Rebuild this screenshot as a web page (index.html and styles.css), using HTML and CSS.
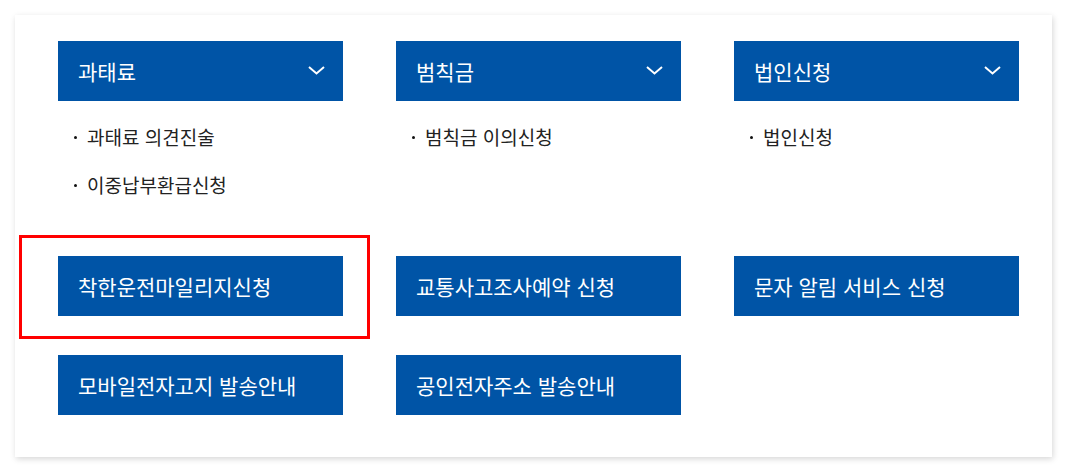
FILE: index.html
```html
<!DOCTYPE html>
<html lang="ko">
  <head>
    <meta charset="UTF-8" />
    <meta name="viewport" content="width=device-width, initial-scale=1.0" />
    <title>민원신청 메뉴</title>
    <link rel="stylesheet" href="styles.css">
  </head>
  <body>
    <div class="card">
      <div class="menu-grid">
        <div class="menu-group">
          <div class="menu-head">
            <span>과태료</span>
            <svg class="chevron" width="17" height="9" viewBox="0 0 17 9"><polyline points="1,1 8.5,7.5 16,1" /></svg>
          </div>
          <ul class="sub-list">
            <li>과태료 의견진술</li>
            <li>이중납부환급신청</li>
          </ul>
        </div>
        <div class="menu-group">
          <div class="menu-head">
            <span>범칙금</span>
            <svg class="chevron" width="17" height="9" viewBox="0 0 17 9"><polyline points="1,1 8.5,7.5 16,1" /></svg>
          </div>
          <ul class="sub-list">
            <li>범칙금 이의신청</li>
          </ul>
        </div>
        <div class="menu-group">
          <div class="menu-head">
            <span>법인신청</span>
            <svg class="chevron" width="17" height="9" viewBox="0 0 17 9"><polyline points="1,1 8.5,7.5 16,1" /></svg>
          </div>
          <ul class="sub-list">
            <li>법인신청</li>
          </ul>
        </div>

        <div class="menu-link highlighted">착한운전마일리지신청</div>
        <div class="menu-link">교통사고조사예약 신청</div>
        <div class="menu-link">문자 알림 서비스 신청</div>

        <div class="menu-link">모바일전자고지 발송안내</div>
        <div class="menu-link">공인전자주소 발송안내</div>
      </div>
    </div>
  </body>
</html>
```

FILE: styles.css
```css
html {
  font-family: "Noto Sans CJK KR", "Noto Sans", sans-serif;
}
body {
  margin: 0;
  padding: 15px;
  background-color: white;
}

.card {
  width: 1037px;
  height: 442px;
  box-sizing: border-box;
  padding: 26px 33px 0 43px;
  background-color: white;
  box-shadow: 1px 2px 6px rgba(0, 0, 0, 0.16);
}
.menu-grid {
  display: grid;
  grid-template-columns: repeat(3, 285px);
  column-gap: 53px;
  row-gap: 39px;
}

.menu-head,
.menu-link {
  height: 60px;
  box-sizing: border-box;
  display: flex;
  align-items: center;
  padding: 0 18px 1px 20px;
  background-color: #0054a6;
  color: white;
  font-size: 21px;
  font-weight: 400;
}
.menu-head {
  justify-content: space-between;
}
.chevron polyline {
  fill: none;
  stroke: white;
  stroke-width: 2;
}

.sub-list {
  list-style: none;
  margin: 0;
  padding: 12px 0 8px 0;
}
.sub-list li {
  position: relative;
  height: 48px;
  line-height: 48px;
  padding-left: 29px;
  font-size: 19px;
  color: #222;
}
.sub-list li::before {
  content: "";
  position: absolute;
  left: 16px;
  top: 23px;
  width: 3px;
  height: 3px;
  border-radius: 50%;
  background-color: #111;
}

/* red annotation frame */
.highlighted {
  position: relative;
}
.highlighted::after {
  content: "";
  position: absolute;
  left: -39px;
  top: -21px;
  width: 351px;
  height: 104px;
  box-sizing: border-box;
  border: 3px solid #f00;
}
```
